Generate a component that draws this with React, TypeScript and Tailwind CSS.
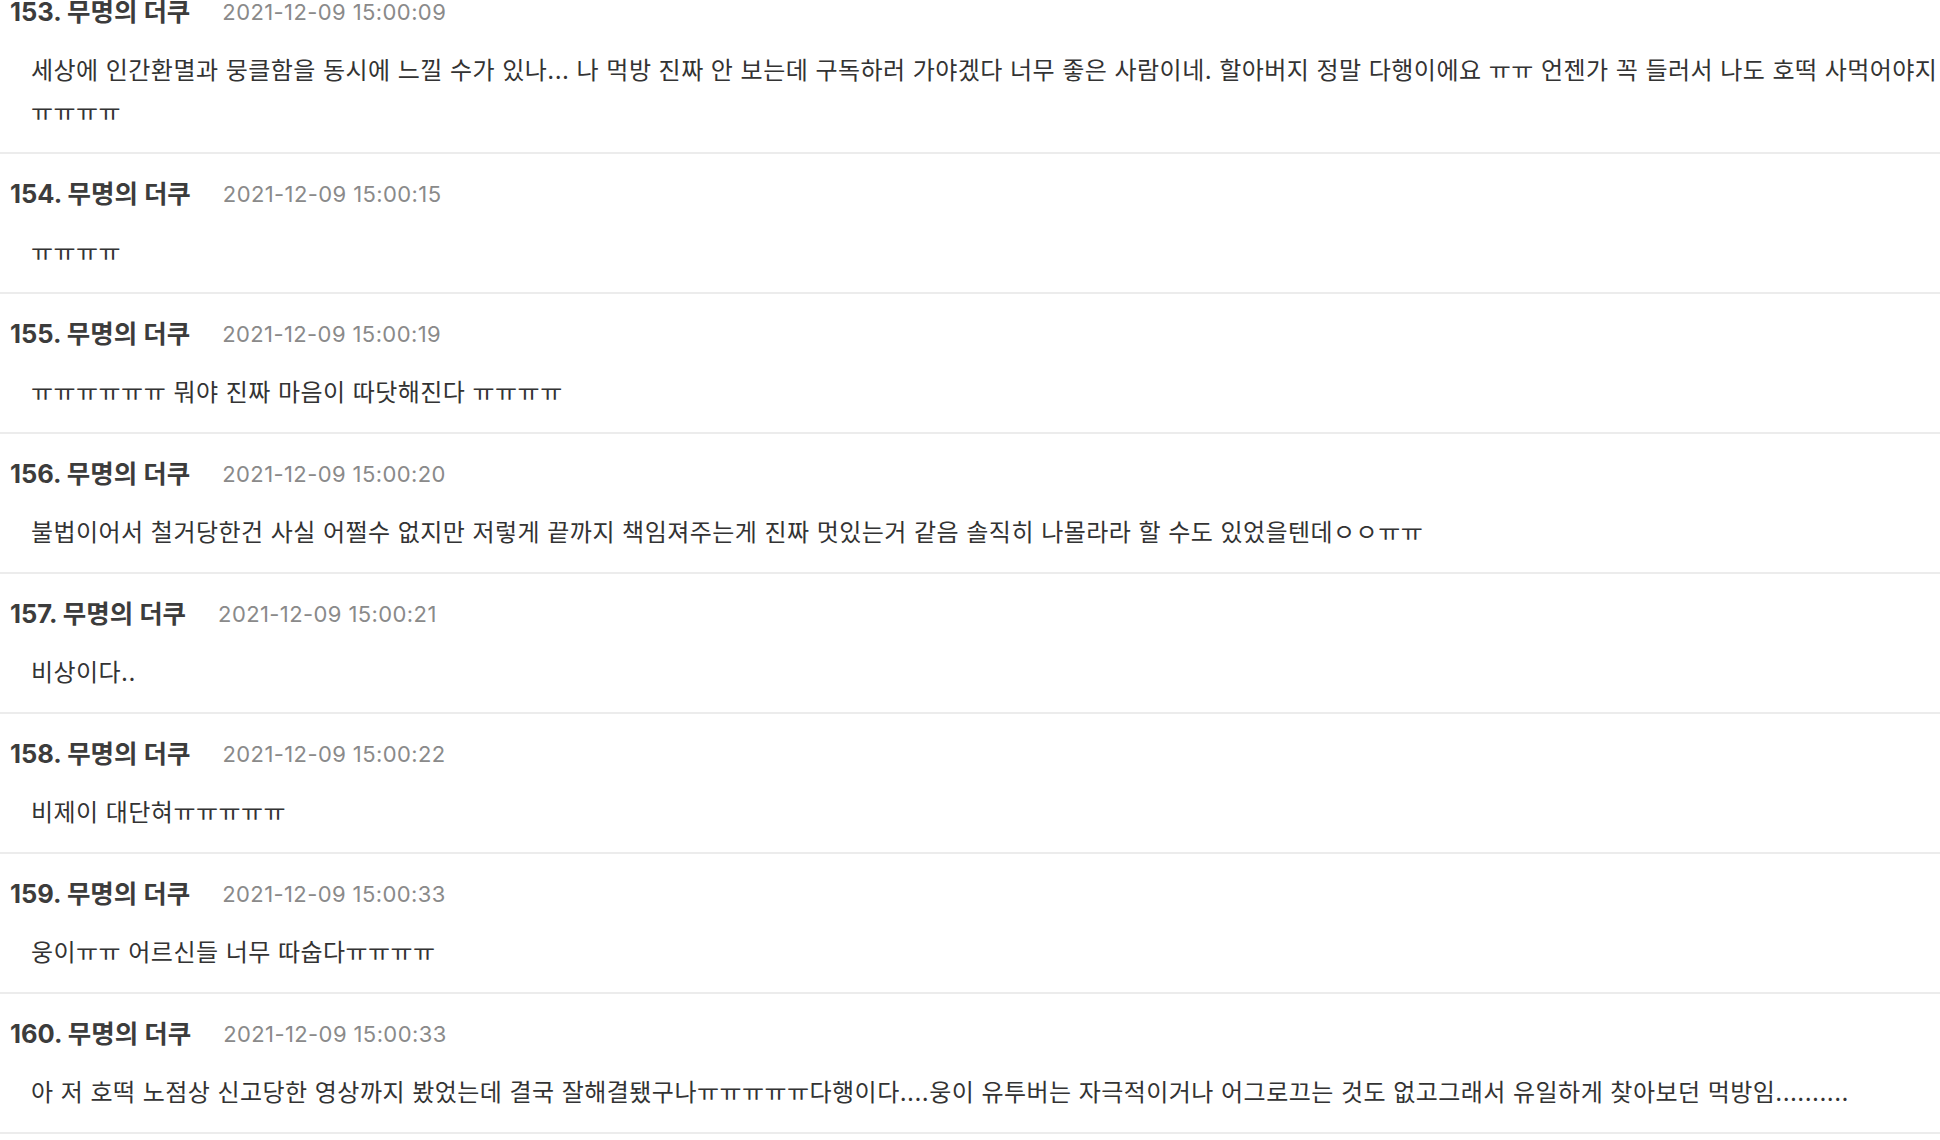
import React from "react";

type Comment = { no: number; date: string; body: string };

const comments: Comment[] = [
  {
    no: 153,
    date: "2021-12-09 15:00:09",
    body: "세상에 인간환멸과 뭉클함을 동시에 느낄 수가 있나... 나 먹방 진짜 안 보는데 구독하러 가야겠다 너무 좋은 사람이네. 할아버지 정말 다행이에요 ㅠㅠ 언젠가 꼭 들러서 나도 호떡 사먹어야지 ㅠㅠㅠㅠ",
  },
  { no: 154, date: "2021-12-09 15:00:15", body: "ㅠㅠㅠㅠ" },
  { no: 155, date: "2021-12-09 15:00:19", body: "ㅠㅠㅠㅠㅠㅠ 뭐야 진짜 마음이 따닷해진다 ㅠㅠㅠㅠ" },
  {
    no: 156,
    date: "2021-12-09 15:00:20",
    body: "불법이어서 철거당한건 사실 어쩔수 없지만 저렇게 끝까지 책임져주는게 진짜 멋있는거 같음 솔직히 나몰라라 할 수도 있었을텐데ㅇㅇㅠㅠ",
  },
  { no: 157, date: "2021-12-09 15:00:21", body: "비상이다.." },
  { no: 158, date: "2021-12-09 15:00:22", body: "비제이 대단혀ㅠㅠㅠㅠㅠ" },
  { no: 159, date: "2021-12-09 15:00:33", body: "웅이ㅠㅠ 어르신들 너무 따숩다ㅠㅠㅠㅠ" },
  {
    no: 160,
    date: "2021-12-09 15:00:33",
    body: "아 저 호떡 노점상 신고당한 영상까지 봤었는데 결국 잘해결됐구나ㅠㅠㅠㅠㅠ다행이다....웅이 유투버는 자극적이거나 어그로끄는 것도 없고그래서 유일하게 찾아보던 먹방임..........",
  },
];

export default function App() {
  return (
    <div className="w-[1940px] h-[1140px] overflow-hidden bg-white font-['Inter','Noto_Sans_CJK_KR',sans-serif]">
      <div className="-mt-[28px]">
        {comments.map((c) => (
          <div key={c.no} className="border-b-2 border-[#ececec] pt-[18px] pb-[18px]">
            <div className="flex items-center h-[44px] pl-[10px]">
              <span className="text-[25.5px] font-bold text-[#3c3c3c] leading-[44px]">
                {c.no}. 무명의 더쿠
              </span>
              <span className="ml-[32px] text-[22px] tracking-[0.4px] text-[#8a8a8a] leading-[44px]">{c.date}</span>
            </div>
            <div className="mt-[16px] pl-[31px] text-[24px] tracking-[0.45px] leading-[42px] text-[#333333]">
              {c.body}
            </div>
          </div>
        ))}
      </div>
    </div>
  );
}
